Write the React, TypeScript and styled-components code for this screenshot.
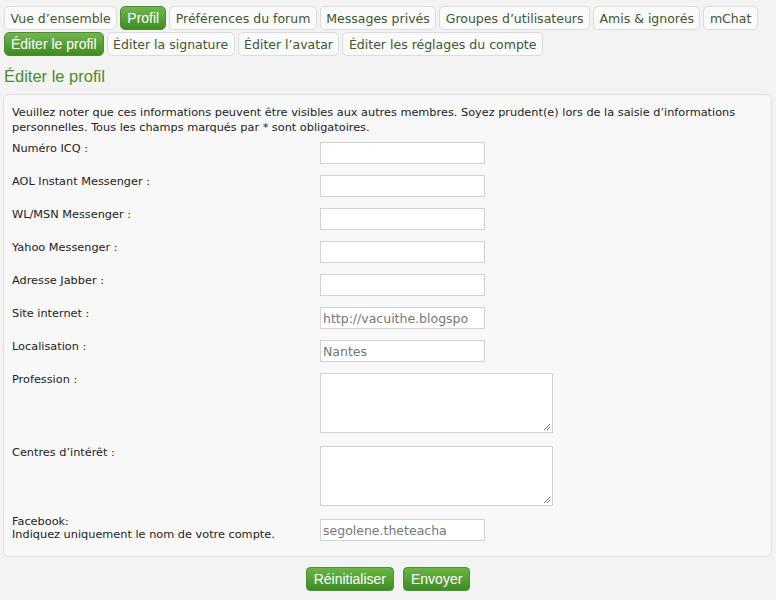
import React from "react";
import styled, { createGlobalStyle } from "styled-components";

const GlobalStyle = createGlobalStyle`
  html, body {
    margin: 0;
    padding: 0;
    background: #f3f3f3;
  }
  body {
    font-family: "DejaVu Sans", Verdana, sans-serif;
  }
`;

const Page = styled.div`
  width: 776px;
  height: 600px;
  padding: 6px 4px 0 3px;
  box-sizing: border-box;
  overflow: hidden;
`;

const TabRow = styled.div`
  display: flex;
  gap: 3px;
  margin-bottom: 2px;
  padding-left: 1px;
`;

const Tab = styled.div<{ $active?: boolean }>`
  height: 24px;
  box-sizing: border-box;
  padding: 0 ${(p) => (p.$active ? "6px" : "5.5px")};
  display: flex;
  align-items: center;
  border-radius: 5px;
  white-space: nowrap;
  font-size: ${(p) => (p.$active ? "14px" : "12.5px")};
  font-family: ${(p) =>
    p.$active ? '"Liberation Sans", Arial, sans-serif' : '"DejaVu Sans", Verdana, sans-serif'};
  color: ${(p) => (p.$active ? "#fff" : "#41572f")};
  background: ${(p) =>
    p.$active ? "linear-gradient(to bottom, #72b54f, #3f8c24)" : "#fafafa"};
  border: 1px solid ${(p) => (p.$active ? "#4a8f2c" : "#dcdcdc")};
`;

const Title = styled.h2`
  margin: 10px 0 8px 1px;
  font-family: "Liberation Sans", Arial, sans-serif;
  font-weight: normal;
  font-size: 16.5px;
  color: #4f8a2e;
  line-height: 20px;
`;

const Panel = styled.div`
  background: #f8f8f8;
  border: 1px solid #e0e0e0;
  border-radius: 6px;
  padding: 10px 9px 15px 8px;
  height: 463px;
  box-sizing: border-box;
`;

const Intro = styled.p`
  margin: 0 0 7px 0;
  font-size: 11.3px;
  line-height: 15px;
  color: #222;
`;

const Row = styled.div<{ $tall?: boolean }>`
  display: grid;
  grid-template-columns: 308px 1fr;
  margin-bottom: ${(p) => (p.$tall ? "13px" : "11px")};
`;

const Label = styled.div<{ $raised?: boolean }>`
  font-size: 11.3px;
  line-height: 13px;
  color: #222;
  margin-top: ${(p) => (p.$raised ? "-4px" : "0")};
`;

const TextInput = styled.div`
  width: 165px;
  height: 22px;
  box-sizing: border-box;
  background: #fff;
  border: 1px solid #d2d2d2;
  font-size: 12.5px;
  color: #777;
  padding: 0 2px;
  display: flex;
  align-items: center;
  overflow: hidden;
  white-space: nowrap;
`;

const TextArea = styled.div`
  position: relative;
  width: 233px;
  height: 60px;
  box-sizing: border-box;
  background: #fff;
  border: 1px solid #d2d2d2;
`;

const Grip = styled.svg`
  position: absolute;
  right: 1px;
  bottom: 1px;
`;

const Actions = styled.div`
  display: flex;
  justify-content: center;
  gap: 9px;
  margin-top: 10px;
  padding-left: 1px;
`;

const Button = styled.div`
  height: 24px;
  box-sizing: border-box;
  padding: 0 7px;
  display: flex;
  align-items: center;
  border-radius: 4px;
  background: linear-gradient(to bottom, #6ab448, #3e8d22);
  border: 1px solid #4a922c;
  color: #fff;
  font-family: "Liberation Sans", Arial, sans-serif;
  font-size: 14px;
`;

type Field = { label: React.ReactNode; value?: string; area?: boolean; twoLine?: boolean };

const fields: Field[] = [
  { label: "Numéro ICQ :" },
  { label: "AOL Instant Messenger :" },
  { label: "WL/MSN Messenger :" },
  { label: "Yahoo Messenger :" },
  { label: "Adresse Jabber :" },
  { label: "Site internet :", value: "http://vacuithe.blogspo" },
  { label: "Localisation :", value: "Nantes" },
  { label: "Profession :", area: true },
  { label: "Centres d’intérêt :", area: true },
  {
    label: (
      <>
        Facebook:
        <br />
        Indiquez uniquement le nom de votre compte.
      </>
    ),
    value: "segolene.theteacha",
    twoLine: true,
  },
];

const topTabs = [
  "Vue d’ensemble",
  "Profil",
  "Préférences du forum",
  "Messages privés",
  "Groupes d’utilisateurs",
  "Amis & ignorés",
  "mChat",
];

const subTabs = [
  "Éditer le profil",
  "Éditer la signature",
  "Éditer l’avatar",
  "Éditer les réglages du compte",
];

export default function App() {
  return (
    <Page>
      <GlobalStyle />
      <TabRow>
        {topTabs.map((t) => (
          <Tab key={t} $active={t === "Profil"}>
            {t}
          </Tab>
        ))}
      </TabRow>
      <TabRow>
        {subTabs.map((t) => (
          <Tab key={t} $active={t === "Éditer le profil"}>
            {t}
          </Tab>
        ))}
      </TabRow>
      <Title>Éditer le profil</Title>
      <Panel>
        <Intro>
          Veuillez noter que ces informations peuvent être visibles aux autres membres. Soyez
          prudent(e) lors de la saisie d’informations personnelles. Tous les champs marqués par *
          sont obligatoires.
        </Intro>
        {fields.map((f, i) => (
          <Row key={i} $tall={f.area}>
            <Label $raised={f.twoLine}>{f.label}</Label>
            {f.area ? (
              <TextArea>
                <Grip width="9" height="9" viewBox="0 0 9 9">
                  <path d="M8 2 L2 8 M8 5 L5 8" stroke="#777" strokeWidth="1" />
                </Grip>
              </TextArea>
            ) : (
              <TextInput>{f.value}</TextInput>
            )}
          </Row>
        ))}
      </Panel>
      <Actions>
        <Button>Réinitialiser</Button>
        <Button>Envoyer</Button>
      </Actions>
    </Page>
  );
}
